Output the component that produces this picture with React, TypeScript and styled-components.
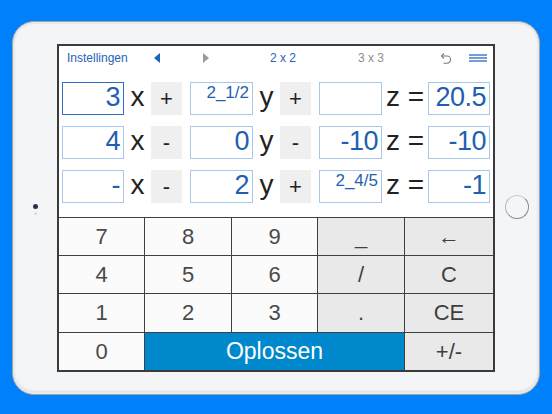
import React from 'react'
import styled, { createGlobalStyle } from 'styled-components'

const GlobalStyle = createGlobalStyle`
  html, body {
    margin: 0;
    padding: 0;
  }

  body {
    background: #0080fa;
    font-family: 'Liberation Sans', Arial, sans-serif;
    overflow: hidden;
  }
`

const Page = styled.div`
  box-sizing: border-box;
  width: 552px;
  height: 414px;
  padding: 21px 12px 19px;
`

const Device = styled.div`
  box-sizing: border-box;
  width: 528px;
  height: 374px;
  display: flex;
  align-items: center;
  background: #f4f5f7;
  border: 1px solid #a3a5a8;
  border-radius: 22px;
  box-shadow: inset 0 0 0 2px #e8e9eb, inset 0 -2px 3px rgba(0, 0, 0, 0.18);
`

const Side = styled.div`
  width: 44px;
  display: flex;
  flex-direction: column;
  align-items: center;
  justify-content: center;
  padding-bottom: 3px;
`

const Camera = styled.div`
  width: 5px;
  height: 5px;
  border-radius: 50%;
  background: #263447;
  box-shadow: 0 7px 0 -1px #dcdde0;
`

const HomeButton = styled.div`
  width: 22px;
  height: 22px;
  border-radius: 50%;
  border: 1.5px solid #8a8b8e;
  border-top-color: #c9cacc;
  border-left-color: #b5b6b8;
`

const Screen = styled.div`
  box-sizing: border-box;
  width: 438px;
  height: 328px;
  display: flex;
  flex-direction: column;
  background: #fff;
  border: 2px solid #3b3b3b;
`

const Toolbar = styled.div`
  height: 24px;
  display: grid;
  grid-template-columns: 76px 44px 54px 100px 76px 1fr 36px 30px;
  align-items: center;
  font-size: 12px;
`

const ToolItem = styled.div<{ $muted?: boolean; $left?: boolean }>`
  display: flex;
  align-items: center;
  justify-content: ${(p) => (p.$left ? 'flex-start' : 'center')};
  padding-left: ${(p) => (p.$left ? '8px' : '0')};
  color: ${(p) => (p.$muted ? '#8e8e8e' : '#1f62b6')};
  font-size: 12px;
  white-space: nowrap;
`

const Equations = styled.div`
  display: flex;
  flex-direction: column;
  gap: 11px;
  padding: 12px 3px 0;
`

const Row = styled.div`
  height: 33px;
  display: grid;
  grid-template-columns: 62px 27px 39px 63px 27px 39px 63px 46px 62px;
  align-items: stretch;
`

const Field = styled.div<{ $focus?: boolean; $small?: boolean }>`
  box-sizing: border-box;
  display: flex;
  justify-content: flex-end;
  align-items: ${(p) => (p.$small ? 'flex-start' : 'center')};
  padding: ${(p) => (p.$small ? '1px 3px 0 0' : '0 3px 2px 0')};
  border: ${(p) => (p.$focus ? '1.5px solid #2e6ec3' : '1px solid #a7c7ec')};
  color: #1f5fb2;
  font-size: ${(p) => (p.$small ? '17px' : '27px')};
  letter-spacing: ${(p) => (p.$small ? '0' : '-0.5px')};
  line-height: 1;
  white-space: nowrap;
`

const Letter = styled.div`
  display: flex;
  align-items: center;
  justify-content: center;
  padding-bottom: 3px;
  font-size: 28px;
  line-height: 1;
  color: #222;
  white-space: pre;
`

const Sign = styled.div`
  width: 31px;
  height: 100%;
  display: flex;
  align-items: center;
  justify-content: center;
  background: #efefef;
  font-size: 22px;
  color: #222;
`

const Keypad = styled.div`
  margin-top: auto;
  display: grid;
  grid-template-columns: 85px 86px 85px 86px 1fr;
  grid-template-rows: 37px 37px 38px 37px;
  gap: 1px;
  padding-top: 1px;
  background: #404040;
`

const tones = {
  light: { bg: '#fbfbfb', fg: '#4a4a4a' },
  gray: { bg: '#e9e9e9', fg: '#3f3f3f' },
  blue: { bg: '#0088cc', fg: '#ffffff' },
}

const Key = styled.div<{ $tone: keyof typeof tones; $span?: number }>`
  grid-column: span ${(p) => p.$span || 1};
  display: flex;
  align-items: center;
  justify-content: center;
  background: ${(p) => tones[p.$tone].bg};
  color: ${(p) => tones[p.$tone].fg};
  font-size: ${(p) => (p.$tone === 'blue' ? '23px' : '22px')};
`

type Cell = { v: string; focus?: boolean }

const rows: { a: Cell; s1: string; b: Cell; s2: string; c: Cell; r: Cell }[] = [
  { a: { v: '3', focus: true }, s1: '+', b: { v: '2_1/2' }, s2: '+', c: { v: '' }, r: { v: '20.5' } },
  { a: { v: '4' }, s1: '-', b: { v: '0' }, s2: '-', c: { v: '-10' }, r: { v: '-10' } },
  { a: { v: '-' }, s1: '-', b: { v: '2' }, s2: '+', c: { v: '2_4/5' }, r: { v: '-1' } },
]

const keys: { label: string; tone: keyof typeof tones; span?: number }[] = [
  { label: '7', tone: 'light' },
  { label: '8', tone: 'light' },
  { label: '9', tone: 'light' },
  { label: '_', tone: 'gray' },
  { label: '←', tone: 'gray' },
  { label: '4', tone: 'light' },
  { label: '5', tone: 'light' },
  { label: '6', tone: 'light' },
  { label: '/', tone: 'gray' },
  { label: 'C', tone: 'gray' },
  { label: '1', tone: 'light' },
  { label: '2', tone: 'light' },
  { label: '3', tone: 'light' },
  { label: '.', tone: 'gray' },
  { label: 'CE', tone: 'gray' },
  { label: '0', tone: 'light' },
  { label: 'Oplossen', tone: 'blue', span: 3 },
  { label: '+/-', tone: 'gray' },
]

function Input({ cell }: { cell: Cell }) {
  return (
    <Field $focus={cell.focus} $small={cell.v.includes('_')}>
      {cell.v}
    </Field>
  )
}

export default function App() {
  return (
    <>
      <GlobalStyle />
      <Page>
        <Device>
          <Side>
            <Camera />
          </Side>
          <Screen>
            <Toolbar>
              <ToolItem $left>Instellingen</ToolItem>
              <ToolItem>
                <svg width="6" height="10" viewBox="0 0 6 10">
                  <polygon points="6,0 0,5 6,10" fill="#1f62b6" />
                </svg>
              </ToolItem>
              <ToolItem>
                <svg width="6" height="10" viewBox="0 0 6 10">
                  <polygon points="0,0 6,5 0,10" fill="#9a9a9a" />
                </svg>
              </ToolItem>
              <ToolItem>2 x 2</ToolItem>
              <ToolItem $muted>3 x 3</ToolItem>
              <div />
              <ToolItem>
                <svg width="13" height="13" viewBox="0 0 13 13" fill="none" stroke="#7a7a7a" strokeWidth="1.1">
                  <path d="M2.5 4 H8 A3.6 3.6 0 0 1 8 11.2 H4.5" />
                  <path d="M5 1.5 L2.5 4 L5 6.5" />
                </svg>
              </ToolItem>
              <ToolItem>
                <svg width="18" height="8" viewBox="0 0 18 8" stroke="#2a68bf" strokeWidth="1.3">
                  <line x1="0" y1="1" x2="18" y2="1" />
                  <line x1="0" y1="4" x2="18" y2="4" />
                  <line x1="0" y1="7" x2="18" y2="7" />
                </svg>
              </ToolItem>
            </Toolbar>
            <Equations>
              {rows.map((row, i) => (
                <Row key={i}>
                  <Input cell={row.a} />
                  <Letter>x</Letter>
                  <div>
                    <Sign>{row.s1}</Sign>
                  </div>
                  <Input cell={row.b} />
                  <Letter>y</Letter>
                  <div>
                    <Sign>{row.s2}</Sign>
                  </div>
                  <Input cell={row.c} />
                  <Letter>z =</Letter>
                  <Input cell={row.r} />
                </Row>
              ))}
            </Equations>
            <Keypad>
              {keys.map((k) => (
                <Key key={k.label} $tone={k.tone} $span={k.span}>
                  {k.label}
                </Key>
              ))}
            </Keypad>
          </Screen>
          <Side>
            <HomeButton />
          </Side>
        </Device>
      </Page>
    </>
  )
}
